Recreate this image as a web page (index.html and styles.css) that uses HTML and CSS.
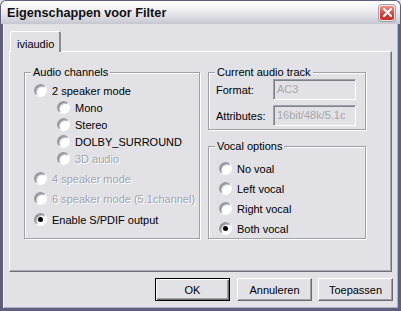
FILE: index.html
```html
<!DOCTYPE html>
<html>
<head>
<meta charset="utf-8">
<link rel="stylesheet" href="styles.css">
</head>
<body>
<div class="window">
  <div class="titlebar">
    <span class="title">Eigenschappen voor Filter</span>
    <span class="close"><svg width="9" height="9" viewBox="0 0 9 9"><path d="M1 1 L8 8 M8 1 L1 8" stroke="#fff" stroke-width="2" stroke-linecap="square"/></svg></span>
  </div>
  <div class="frame">
    <div class="tabs"><div class="tab">iviaudio</div></div>
    <div class="panel">
      <fieldset class="group audio">
        <legend>Audio channels</legend>
        <div class="inner">
          <div class="row"><span class="radio"></span>2 speaker mode</div>
          <div class="row sub"><span class="radio"></span>Mono</div>
          <div class="row sub"><span class="radio"></span>Stereo</div>
          <div class="row sub"><span class="radio"></span>DOLBY_SURROUND</div>
          <div class="row sub disabled"><span class="radio"></span>3D audio</div>
          <div class="row disabled gap3"><span class="radio"></span>4 speaker mode</div>
          <div class="row disabled gap3"><span class="radio"></span>6 speaker mode (5.1channel)</div>
          <div class="row gap4"><span class="radio checked"></span>Enable S/PDIF output</div>
        </div>
      </fieldset>
      <div class="rightcol">
        <fieldset class="group track">
          <legend>Current audio track</legend>
          <div class="fields">
            <span class="label">Format:</span><span class="box">AC3</span>
            <span class="label">Attributes:</span><span class="box">16bit/48k/5.1c</span>
          </div>
        </fieldset>
        <fieldset class="group vocal">
          <legend>Vocal options</legend>
          <div class="inner">
            <div class="vrow"><span class="radio"></span>No voal</div>
            <div class="vrow"><span class="radio"></span>Left vocal</div>
            <div class="vrow"><span class="radio"></span>Right vocal</div>
            <div class="vrow"><span class="radio checked"></span>Both vocal</div>
          </div>
        </fieldset>
      </div>
    </div>
    <div class="buttons">
      <button class="btn default">OK</button>
      <button class="btn">Annuleren</button>
      <button class="btn">Toepassen</button>
    </div>
  </div>
</div>
</body>
</html>
```
FILE: styles.css
```css
* { box-sizing: border-box; }
html, body { margin: 0; padding: 0; background: #e1e1e6; }
body {
  font-family: "Liberation Sans", Arial, sans-serif;
  font-size: 11px;
  color: #000;
}
.window {
  width: 401px;
  height: 311px;
  display: flex;
  flex-direction: column;
  background: #e1e1e6;
}
.titlebar {
  height: 24px;
  flex: none;
  display: flex;
  align-items: center;
  justify-content: space-between;
  padding: 0 5px 0 6px;
  border: 1px solid #5e5e7e;
  border-bottom: none;
  border-radius: 6px 6px 0 0;
  background: linear-gradient(#ffffff 0%, #f4f4f7 30%, #e0e0e6 65%, #c6c6d0 100%);
}
.title {
  font-weight: bold;
  font-size: 12.7px;
  color: #101010;
  padding-top: 1px;
}
.close {
  width: 16px;
  height: 16px;
  border: 1px solid #f4e4e4;
  border-radius: 3px;
  background: linear-gradient(#ee9088, #cf4038 60%, #c23530);
  display: flex;
  align-items: center;
  justify-content: center;
  box-shadow: 0 0 0 1px #a0a0b0;
}
.frame {
  flex: 1;
  display: flex;
  flex-direction: column;
  border: 3px solid #5e5e7e;
  border-top: none;
  box-shadow: inset 1px 0 0 #f4f4f8, inset -1px -1px 0 #b0b0c0;
  padding: 7px 6px 7px 6px;
}
.tabs { display: flex; height: 20px; padding-left: 1px; }
.tab {
  position: relative;
  z-index: 1;
  width: 51px;
  height: 21px;
  border-top: 1px solid #fff;
  border-left: 1px solid #fff;
  border-right: 2px solid #8a8a90;
  border-radius: 3px 3px 0 0;
  background: #e1e1e6;
  padding: 6px 0 0 6px;
  line-height: 12px;
}
.panel {
  height: 221px;
  border-top: 1px solid #fff;
  border-left: 1px solid #fff;
  border-right: 1px solid #707078;
  border-bottom: 1px solid #707078;
  box-shadow: inset -1px -1px 0 #a8a8b0;
  display: grid;
  grid-template-columns: 176px 158px;
  column-gap: 8px;
  align-items: start;
  padding: 13px 0 0 14px;
}
.group {
  margin: 0;
  padding: 0;
  min-width: 0;
  border: 1px solid #a0a0ac;
  box-shadow: 1px 1px 0 #fff, inset 1px 1px 0 #fff;
}
.group legend {
  padding: 0 2px;
  margin-left: 6px;
  line-height: 14px;
  background: #e1e1e6;
}
.audio { height: 174px; }
.audio .inner { padding: 3px 0 0 9px; }
.row {
  height: 17px;
  display: flex;
  align-items: center;
  white-space: nowrap;
}
.row.sub { padding-left: 23px; }
.row.gap3 { margin-top: 3px; }
.row.gap4 { margin-top: 4px; }
.radio {
  width: 13px;
  height: 13px;
  flex: none;
  border-radius: 50%;
  margin-right: 5px;
  background: radial-gradient(circle at 60% 60%, #ffffff 0%, #ffffff 45%, #e4e4ea 80%);
  box-shadow: inset 1px 1px 0 #8c8c94, inset 2px 2px 0 #c8c8d0;
  border: 1px solid;
  border-color: #9a9aa2 #ffffff #ffffff #9a9aa2;
  position: relative;
}
.radio.checked::after {
  content: "";
  position: absolute;
  left: 3px;
  top: 3px;
  width: 5px;
  height: 5px;
  border-radius: 50%;
  background: #000;
}
.disabled { color: #a4a4a8; text-shadow: 1px 1px 0 #fff; }
.rightcol { display: flex; flex-direction: column; gap: 9px; }
.track { height: 65px; }
.fields {
  display: grid;
  grid-template-columns: 57px 83px;
  grid-template-rows: 21px 21px;
  row-gap: 5px;
  align-items: center;
  padding-left: 7px;
}
.box {
  height: 21px;
  border: 1px solid;
  border-color: #a0a0a8 #ffffff #ffffff #a0a0a8;
  box-shadow: inset 1px 1px 0 #808088;
  color: #a8a8a8;
  padding: 3px 0 0 3px;
  line-height: 13px;
  white-space: nowrap;
  overflow: hidden;
}
.vocal { height: 100px; }
.vocal .inner { padding: 7px 0 0 10px; }
.vrow {
  height: 17px;
  margin-bottom: 3px;
  display: flex;
  align-items: center;
}
.buttons {
  display: flex;
  justify-content: flex-end;
  gap: 6px;
  margin-top: 6px;
  margin-right: -1px;
}
.btn {
  width: 75px;
  height: 23px;
  font-family: "Liberation Sans", Arial, sans-serif;
  font-size: 11px;
  color: #000;
  background: #e1e1e6;
  border: 1px solid;
  border-color: #ffffff #6a6a70 #6a6a70 #ffffff;
  box-shadow: inset -1px -1px 0 #a0a0a8;
  padding: 0;
}
.btn.default {
  margin-right: 1px;
  border: 1px solid #000;
  box-shadow: inset 1px 1px 0 #fff, inset -1px -1px 0 #6a6a70, inset -2px -2px 0 #a0a0a8;
}
```
